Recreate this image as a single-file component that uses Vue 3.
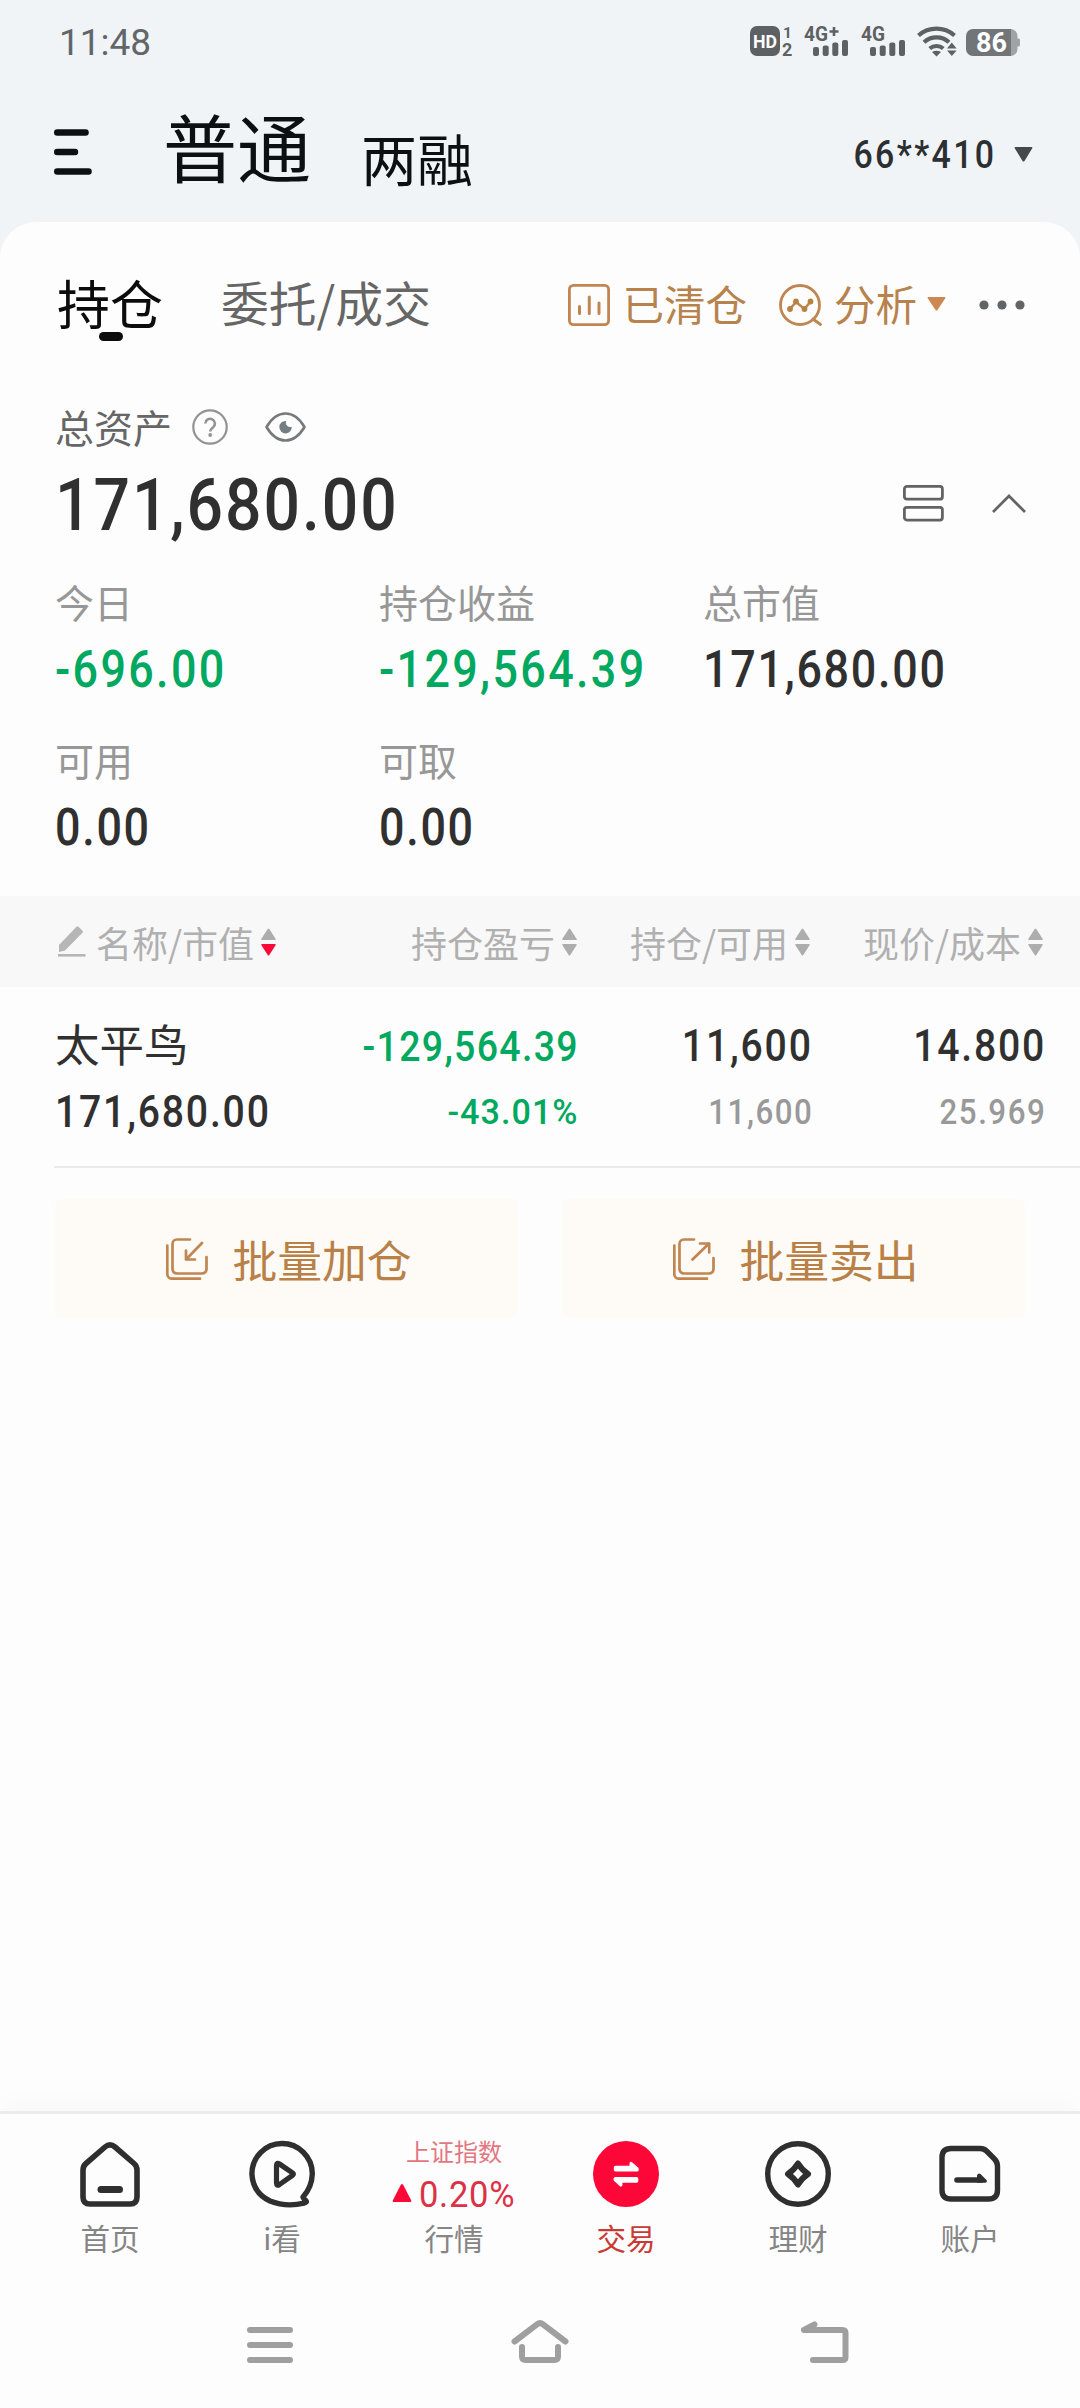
<script setup>
const assets = [
  { label: '今日', value: '-696.00', down: true },
  { label: '持仓收益', value: '-129,564.39', down: true },
  { label: '总市值', value: '171,680.00' },
  { label: '可用', value: '0.00' },
  { label: '可取', value: '0.00' },
]

const columns = [
  { title: '名称/市值', sorted: true, editable: true },
  { title: '持仓盈亏' },
  { title: '持仓/可用' },
  { title: '现价/成本' },
]

const bars = [
  { x: 0, h: 9 },
  { x: 9.7, h: 10.5 },
  { x: 19.3, h: 13.5 },
  { x: 29, h: 16 },
]
</script>

<template>
  <div class="screen">
    <header class="top">
      <div class="status">
        <span class="clock">11:48</span>
        <svg class="status-icons" width="270" height="52" viewBox="750 17 270 52">
          <rect x="750" y="27" width="30" height="30" rx="7" fill="#5d6163" />
          <text x="753" y="49" class="st hd" textLength="24" lengthAdjust="spacingAndGlyphs">HD</text>
          <text x="783" y="38.5" class="st" font-size="15.5">1</text>
          <text x="782" y="57" class="st" font-size="18">2</text>
          <text x="804" y="41.5" class="st" font-size="20.5" textLength="24" lengthAdjust="spacingAndGlyphs">4G</text>
          <path d="M829.5 32.5h9M834 28v9" stroke="#5d6163" stroke-width="2.6" />
          <text x="861" y="41.5" class="st" font-size="20.5" textLength="24" lengthAdjust="spacingAndGlyphs">4G</text>
          <g fill="#5d6163">
            <rect v-for="b in bars" :key="'a' + b.x" :x="813 + b.x" :y="57 - b.h" width="6" :height="b.h" rx="2" />
            <rect v-for="b in bars" :key="'b' + b.x" :x="870 + b.x" :y="57 - b.h" width="6" :height="b.h" rx="2" />
          </g>
          <g fill="none" stroke="#5d6163" stroke-width="4.2">
            <path d="M918.5 36.5a27 27 0 0 1 36 0" />
            <path d="M924 43.3a18.5 18.5 0 0 1 25 0" />
            <path d="M929.7 49.5a10.5 10.5 0 0 1 13.6 0" />
          </g>
          <path d="M932 53q4.500-2.600 9 0L936.500 57.500z" fill="#5d6163" />
          <path d="M947 49.500l4.800-6 4.800 6zM947 51.500l4.800 5.500 4.800-5.500z" fill="#5d6163" />
          <path d="M1009 30h1.500a7 7 0 0 1 7 7v2.500h1a1.500 1.500 0 0 1 1.500 1.500v5a1.500 1.500 0 0 1-1.500 1.500h-1V50a7 7 0 0 1-7 7h-1.500z" fill="#a0a3a5" />
          <path d="M973 30h38v27h-38a7 7 0 0 1-7-7V37a7 7 0 0 1 7-7z" fill="#717577" />
          <text x="976" y="52.500" class="st bat" textLength="31" lengthAdjust="spacingAndGlyphs">86</text>
        </svg>
      </div>
      <div class="title-bar">
        <svg class="menu" width="38" height="46" viewBox="0 0 38 46" stroke="#0c1012" stroke-width="6.4" stroke-linecap="round">
          <path d="M3.200 3.500h28.400M3.200 23h17.800M3.200 42.500h31.400" />
        </svg>
        <span class="t-main">普通</span>
        <span class="t-sub">两融</span>
        <span class="account"><span class="num n-acc">66**410</span></span>
        <svg width="19" height="15" viewBox="0 0 19 15"><path d="M1.500 0h16q1.500 0 .6 1.500l-7.600 12.500q-1 1.200-2 0L.9 1.500Q0 0 1.500 0z" fill="#43494c" /></svg>
      </div>
    </header>

    <main class="sheet">
      <nav class="tabs">
        <span class="tab on">持仓<i class="pill"></i></span>
        <span class="tab">委托/成交</span>
        <span class="tool cleared">
          <svg width="42" height="42" viewBox="0 0 42 42" fill="none" stroke="#c08550" stroke-linecap="round">
            <rect x="1.400" y="1.400" width="39.200" height="39.200" rx="4" stroke-width="2.800" />
            <path d="M11.500 22.500v7M21.300 13v16.500M31 19v10.500" stroke-width="3" />
          </svg>
          <span class="tool-text">已清仓</span>
        </span>
        <span class="tool analysis">
          <svg width="43" height="42" viewBox="0 0 43 42" fill="none" stroke="#c08550">
            <circle cx="21" cy="21" r="19.500" stroke-width="2.800" />
            <path d="M34 35l7.500 5.500" stroke-width="2.800" stroke-linecap="round" />
            <path d="M11 25l6-7 8.500 7 6-7.500" stroke-width="2.600" />
            <g fill="#b8823f" stroke="none"><circle cx="11" cy="25" r="2.900" /><circle cx="17" cy="17.500" r="2.900" /><circle cx="25.500" cy="25" r="2.900" /><circle cx="31.500" cy="17.500" r="2.900" /></g>
          </svg>
          <span class="tool-text">分析</span>
        </span>
        <svg class="caret" width="19" height="14" viewBox="0 0 19 14"><path d="M1.500 0h16q1.500 0 .6 1.500l-7.600 11.500q-1 1.200-2 0L.9 1.500Q0 0 1.500 0z" fill="#cd8750" /></svg>
        <svg class="more" width="46" height="10" viewBox="0 0 46 10" fill="#626567"><circle cx="5" cy="5" r="4.600" /><circle cx="23" cy="5" r="4.600" /><circle cx="41" cy="5" r="4.600" /></svg>
      </nav>

      <section class="summary">
        <div class="total-label">
          <span class="total-text">总资产</span>
          <svg class="help" width="36" height="36" viewBox="0 0 36 36" fill="none" stroke="#939393">
            <circle cx="18" cy="18" r="16.700" stroke-width="2.200" />
            <path d="M13.300 14.500a4.800 4.800 0 1 1 7.600 4q-2.600 1.800-2.600 4" stroke-width="2.600" />
            <circle cx="18.200" cy="26" r="1.900" fill="#939393" stroke="none" />
          </svg>
          <svg class="eye" width="41" height="30" viewBox="0 0 41 30" fill="none">
            <path d="M1.500 15Q9.500 1.500 20.500 1.500T39.500 15Q31.500 28.500 20.500 28.500T1.500 15z" stroke="#77797b" stroke-width="2.600" stroke-linejoin="round" />
            <path d="M21 9a6.200 6.200 0 1 0 5.700 5.500q-2.500 1.300-4.500-.7T21 9z" fill="#737d84" />
          </svg>
        </div>
        <div class="total">
          <span class="num n-total">171,680.00</span>
          <svg class="layout" width="41" height="37" viewBox="0 0 41 37" fill="none" stroke="#636363" stroke-width="2.800">
            <rect x="1.400" y="1.400" width="38" height="12.800" rx="2.500" />
            <rect x="1.400" y="22.300" width="38" height="12.800" rx="2.500" />
          </svg>
          <svg class="up" width="34" height="19" viewBox="0 0 34 19" fill="none" stroke="#636363" stroke-width="2.700"><path d="M1 18L17 2l16 16" /></svg>
        </div>
        <dl class="assets">
          <div v-for="a in assets" :key="a.label">
            <dt>{{ a.label }}</dt>
            <dd><span class="num n-val" :class="{ down: a.down }">{{ a.value }}</span></dd>
          </div>
        </dl>
      </section>

      <div class="grid head">
        <span v-for="c in columns" :key="c.title" class="col">
          <svg v-if="c.editable" class="pen" width="28" height="31" viewBox="0 0 28 31" fill="#b6b6b6">
            <path d="M1 26v-7L18.500.8q1-.9 2 0l4 4q.9 1 0 2L7 24.500z" /><rect y="28" width="27.500" height="2.600" />
          </svg>
          {{ c.title }}
          <svg class="sort" width="15" height="28" viewBox="0 0 15 28">
            <path d="M1.200 12Q-.4 12 .6 10.600L6.700 1q.8-1 1.600 0l6.100 9.600q1 1.400-.6 1.400z" fill="#adadad" />
            <path d="M1.200 16Q-.4 16 .6 17.400L6.700 27q.8 1 1.600 0l6.100-9.600q1-1.400-.6-1.400z" :fill="c.sorted ? '#fb0a38' : '#adadad'" />
          </svg>
        </span>
      </div>

      <div class="grid row">
        <div class="col"><span class="name">太平鸟</span><span class="num n-row left">171,680.00</span></div>
        <div class="col"><span class="num n-pl down">-129,564.39</span><span class="num n-pct down">-43.01%</span></div>
        <div class="col"><span class="num n-row">11,600</span><span class="num n-sub">11,600</span></div>
        <div class="col"><span class="num n-row">14.800</span><span class="num n-sub">25.969</span></div>
      </div>

      <div class="actions">
        <button>
          <svg width="42" height="42" viewBox="0 0 42 42" fill="none" stroke="#c08550" stroke-width="2.700" stroke-linecap="round" stroke-linejoin="round">
            <path d="M24 1.500H11a4.500 4.500 0 0 0-4.500 4.500v25a4.500 4.500 0 0 0 4.500 4.500h25a4.500 4.500 0 0 0 4.500-4.500V19" />
            <path d="M1.300 7.500V36a4.700 4.700 0 0 0 4.700 4.700h28M36 5L20 21.500M20 12.500v9h9" />
          </svg>
          批量加仓
        </button>
        <button>
          <svg width="42" height="42" viewBox="0 0 42 42" fill="none" stroke="#c08550" stroke-width="2.700" stroke-linecap="round" stroke-linejoin="round">
            <path d="M21 1.500H11a4.500 4.500 0 0 0-4.500 4.500v25a4.500 4.500 0 0 0 4.500 4.500h25a4.500 4.500 0 0 0 4.500-4.500V20" />
            <path d="M1.300 7.500V36a4.700 4.700 0 0 0 4.700 4.700h28M19.500 21.500L36 5.500M27 5.500h9.200v9" />
          </svg>
          批量卖出
        </button>
      </div>
    </main>

    <nav class="dock">
      <span class="item">
        <svg width="68" height="68" viewBox="0 0 68 68" fill="none" stroke="#2f2f2f" stroke-width="5.600" stroke-linejoin="round">
          <path d="M7 30q0-4 3-6.500L29 7q5-4.200 10 0l19 16.500q3 2.500 3 6.500v27q0 7-7 7H14q-7 0-7-7z" />
          <path d="M25 49.500h18.500" stroke-width="7" stroke-linecap="round" />
        </svg>
        <b>首页</b>
      </span>
      <span class="item">
        <svg width="68" height="68" viewBox="0 0 68 68" fill="none" stroke="#2f2f2f" stroke-width="5.400" stroke-linejoin="round" stroke-linecap="round">
          <path d="M55 57Q64 47 64.300 33.500A30.200 30.200 0 1 0 3.900 34Q5 53 22 61 38 67.500 56 63.200q3.500-.8 1.800-2.700-2-1.200-2.800-3.500z" />
          <path d="M28.500 25.500q0-3.500 3-1.500l13 8.800q1.800 1.200 0 2.500l-13 9.200q-3 2-3-1.500z" stroke-width="5.200" />
        </svg>
        <b>i看</b>
      </span>
      <span class="item market">
        <em>上证指数</em>
        <span class="quote">
          <svg width="20" height="20" viewBox="0 0 20 20"><path d="M2 19Q0 19 1 17L8.700 2q1.300-2 2.600 0L19 17q1 2-1 2z" fill="#fb0a38" /></svg>
          <span class="num n-idx">0.20%</span>
        </span>
        <b>行情</b>
      </span>
      <span class="item active">
        <svg width="68" height="68" viewBox="0 0 68 68">
          <circle cx="34" cy="34" r="33" fill="#fd0638" />
          <path d="M23.500 25.700h14v-2.800q1-1.800 2.500-.6l6.400 5.500q1.400 3.500-1.400 3.700H23.500q-1.700 0-1.700-1.700v-2.400q0-1.700 1.700-1.700zM44.600 37h-21q-3 .3-1.700 3.700l6 5.600q1.700 1 2.500-.8v-2.800h14.200q1.700 0 1.700-1.700v-2.300q0-1.700-1.700-1.700z" fill="#fff" />
        </svg>
        <b>交易</b>
      </span>
      <span class="item">
        <svg width="68" height="68" viewBox="0 0 68 68" fill="none" stroke="#2f2f2f">
          <circle cx="34" cy="34" r="30.300" stroke-width="5.400" />
          <path d="M34 23.500q4 6.500 10 10.500-6 4-10 10.500Q30 38 24 34q6-4 10-10.500z" stroke-width="6" stroke-linejoin="round" />
        </svg>
        <b>理财</b>
      </span>
      <span class="item">
        <svg width="68" height="68" viewBox="0 0 68 68" fill="none" stroke="#2f2f2f" stroke-width="5.400">
          <path d="M15 8.500h29q4 0 6.500 2.500l8 8q3 3 3 7v24q0 9-9 9H15q-9 0-9-9V17.500q0-9 9-9z" stroke-linejoin="round" />
          <path d="M21 40h24" stroke-width="5.600" stroke-linecap="round" />
          <path d="M41 38.500v-3q1-3 3.500-1.500l6 6q1.200 2.200-1.300 2.800H41z" fill="#2f2f2f" stroke="none" />
        </svg>
        <b>账户</b>
      </span>
    </nav>

    <footer class="sys">
      <svg width="270" height="50" viewBox="0 0 270 50" fill="none" stroke="#9f9f9f" stroke-width="6" stroke-linecap="round"><path d="M115 13h40M115 28h40M115 43h40" /></svg>
      <svg width="270" height="50" viewBox="0 0 270 50" fill="none" stroke="#9f9f9f" stroke-width="6" stroke-linecap="round" stroke-linejoin="round"><path d="M109.500 24.500L132 7.300q3-2.300 6 0l22.500 17.200M117 30v9.500q0 3.500 3.500 3.500h29q3.500 0 3.500-3.500V30" /></svg>
      <svg width="270" height="50" viewBox="0 0 270 50" fill="none" stroke="#9f9f9f" stroke-width="6" stroke-linecap="round" stroke-linejoin="round"><path d="M139.500 7.500L129 13h38.500q3 0 3 3v24q0 3-3 3H138" /></svg>
    </footer>
  </div>
</template>

<style>
body {
  margin: 0;
  background: #fdfdfd;
}
</style>

<style scoped>
.screen {
  width: 1080px;
  height: 2408px;
  overflow: hidden;
  display: flex;
  flex-direction: column;
  background: #f0f4f7;
  font-family: "Noto Sans CJK SC", sans-serif;
  color: #303030;
}
.screen svg { flex: none; display: block; }
.num {
  display: inline-block;
  font-family: Roboto, sans-serif;
  font-weight: 500;
  white-space: nowrap;
  transform: scaleX(0.88);
  transform-origin: left center;
}
.down { color: #00a860; }

.top { height: 222px; flex: none; }
.status {
  height: 86px;
  padding: 0 60px 0 59px;
  display: flex;
  justify-content: space-between;
  align-items: center;
}
.status-icons { margin-top: -2px; }
.clock {
  font-family: Roboto, sans-serif;
  font-size: 37px;
  color: #626668;
  margin-top: -1px;
}
.st { font-family: Roboto, sans-serif; font-weight: 700; fill: #5d6163; }
.st.hd { font-size: 19px; fill: #fff; }
.st.bat { font-size: 27px; fill: #fff; }
.title-bar {
  height: 136px;
  padding: 0 47px 0 54px;
  display: flex;
  align-items: center;
  color: #0c1012;
}
.menu { margin-top: -4px; }
.t-main { margin-left: 71px; font-size: 74px; line-height: 80px; margin-top: -18px; }
.t-sub { margin-left: 50px; font-size: 56px; line-height: 60px; margin-top: 6px; }
.account { margin-left: auto; margin-right: 18px; color: #2b2f31; }
.n-acc { font-size: 38.5px; letter-spacing: 0.07em; transform-origin: right center; }

.sheet {
  flex: 1;
  background: #fdfdfd;
  border-radius: 36px 36px 0 0;
}
.tabs {
  height: 166px;
  padding: 0 55px 0 57px;
  display: flex;
  align-items: center;
}
.tab { font-size: 47.8px; line-height: 60px; color: #666; margin: -6px 0 0 58px; }
.tab.on { position: relative; font-size: 53px; color: #0c0c0c; margin-left: 0; }
.pill {
  position: absolute;
  left: 42px;
  bottom: -9px;
  width: 24px;
  height: 9px;
  border-radius: 4.5px;
  background: #0c0c0c;
}
.tool { display: flex; align-items: center; font-size: 41.5px; line-height: 50px; color: #b8824c; }
.tool svg { margin-right: 12px; }
.tool-text { margin-top: -5px; }
.cleared { margin-left: auto; }
.analysis { margin-left: 32px; }
.caret { margin: -3px 0 0 10px; }
.more { margin-left: 33px; }

.summary { height: 508px; padding: 0 54px 0 55px; }
.total-label {
  height: 78px;
  display: flex;
  align-items: center;
  font-size: 39px;
  line-height: 50px;
  color: #666;
}
.total-text { margin-top: -3px; }
.help { margin-left: 20px; }
.eye { margin-left: 37px; }
.total { height: 78px; display: flex; align-items: center; }
.n-total { font-size: 73px; letter-spacing: 0.03em; line-height: 78px; }
.layout { margin: -3px 0 0 auto; }
.up { margin: -3px 0 0 48px; }
.assets {
  margin: 27px 0 0;
  display: grid;
  grid-template-columns: repeat(3, 324px);
  grid-auto-rows: 158px;
}
.assets dt { font-size: 39px; line-height: 60px; color: #979797; }
.assets dd { margin: 6px 0 0; height: 60px; }
.n-val { font-size: 51px; line-height: 66px; letter-spacing: 0.038em; }
.n-val.down { letter-spacing: 0.052em; }

.grid {
  display: grid;
  grid-template-columns: 280px 244px 233px 233px;
  padding-left: 55px;
}
.head { height: 91px; background: #f8f8f8; font-size: 36px; color: #b0b0b0; }
.head .col { display: flex; align-items: center; justify-content: flex-end; padding-right: 2px; line-height: 50px; }
.head .col:first-child { justify-content: flex-start; }
.pen { margin: 0 10px 0 3px; }
.sort { margin-left: 7px; }
.row {
  height: 181px;
  margin-bottom: 31px;
  background: linear-gradient(#ebebeb, #ebebeb) 54px 100% / 1026px 2px no-repeat;
}
.row .col { display: flex; flex-direction: column; align-items: flex-end; padding-top: 26px; }
.row .col:first-child { align-items: flex-start; }
.row .col > * { height: 66px; line-height: 66px; transform-origin: right center; }
.row .col > .left { transform-origin: left center; }
.row .col > .name { line-height: 59px; font-size: 44.5px; }
.n-row { font-size: 44.5px; letter-spacing: 0.046em; margin-right: -1px; }
.n-pl { font-size: 42.6px; letter-spacing: 0.035em; }
.row .n-pct { font-size: 35.6px; letter-spacing: 0.03em; transform: scaleX(0.96); }
.n-sub { font-size: 35.6px; letter-spacing: 0.048em; color: #999; margin-right: -1px; }

.actions { display: flex; gap: 44px; padding: 0 55px; }
.actions button {
  flex: 1;
  height: 119px;
  border: 0;
  border-radius: 6px;
  background: #fefbf6;
  display: flex;
  align-items: center;
  justify-content: center;
  gap: 24px;
  padding-left: 11px;
  font: 44.8px/60px "Noto Sans CJK SC", sans-serif;
  color: #b98048;
}

.dock {
  flex: none;
  height: 176px;
  border-top: 3px solid #ececec;
  box-shadow: 0 -8px 24px rgba(0, 0, 0, 0.025);
  background: #fdfdfd;
  padding: 0 24px;
  display: grid;
  grid-template-columns: repeat(6, 1fr);
}
.item { display: flex; flex-direction: column; align-items: center; padding-top: 26px; }
.item b { font-weight: 400; font-size: 29.6px; line-height: 36px; margin-top: 12px; color: #858585; }
.active b { color: #c93a35; }
.market em { font-style: normal; font-size: 24px; line-height: 26px; margin-top: -2px; color: #e27781; }
.quote { display: flex; align-items: center; gap: 7px; height: 44px; margin-top: 7px; }
.n-idx { font-size: 36px; color: #dc3248; margin: 4px -3px 0 0; letter-spacing: 0.02em; font-weight: 400; transform: scaleX(0.96); }
.market b { margin-top: 5px; }

.sys { flex: none; height: 118px; padding: 27px 135px 0; display: flex; box-sizing: border-box; background: #fdfdfd; }
</style>
